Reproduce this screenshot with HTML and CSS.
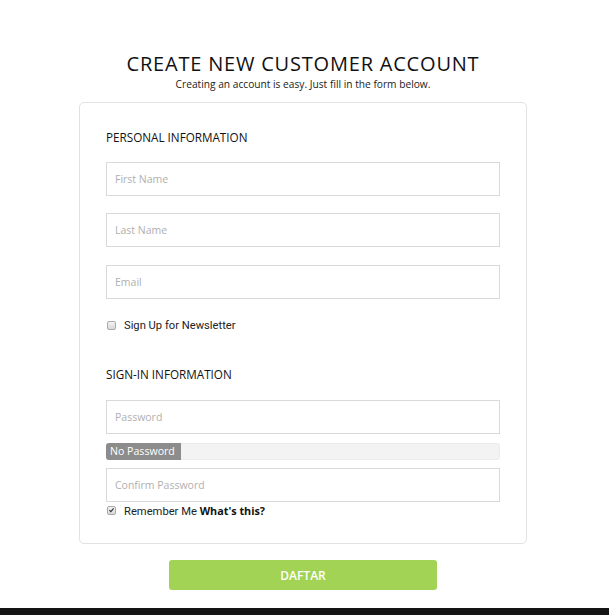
FILE: index.html
```html
<!DOCTYPE html>
<html lang="id">
<head>
<meta charset="utf-8">
<title>Create New Customer Account</title>
<link rel="stylesheet" href="styles.css">
</head>
<body>
<main class="page">
  <header class="head">
    <h1 class="title">CREATE NEW CUSTOMER ACCOUNT</h1>
    <p class="subtitle">Creating an account is easy. Just fill in the form below.</p>
  </header>
  <form class="card">
    <h2 class="section">PERSONAL INFORMATION</h2>
    <div class="field"><input class="input" type="text" placeholder="First Name"></div>
    <div class="field"><input class="input" type="text" placeholder="Last Name"></div>
    <div class="field field-email"><input class="input" type="email" placeholder="Email"></div>
    <label class="check check-news"><span class="box"></span><span class="check-text">Sign Up for Newsletter</span></label>

    <h2 class="section section-signin">SIGN-IN INFORMATION</h2>
    <div class="field"><input class="input" type="password" placeholder="Password"></div>
    <div class="meter"><span class="meter-fill">No Password</span></div>
    <div class="field field-last"><input class="input" type="password" placeholder="Confirm Password"></div>
    <label class="check check-remember"><span class="box box-checked"><svg viewBox="0 0 10 10" width="8" height="8"><path d="M2 5.2 L4.1 7.3 L8 2.6" fill="none" stroke="#333" stroke-width="1.6"/></svg></span><span class="check-text">Remember Me <b class="what">What's this?</b></span></label>
  </form>
  <div class="actions"><button class="btn" type="button">DAFTAR</button></div>
</main>
<footer class="footer"></footer>
</body>
</html>
```
FILE: styles.css
```css
* { box-sizing: border-box; }
html, body { margin: 0; padding: 0; background: #fff; }
body {
  font-family: "Open Sans", "Liberation Sans", sans-serif;
  color: #222;
  min-height: 615px;
  display: flex;
  flex-direction: column;
}
.page {
  flex: 1;
  display: flex;
  flex-direction: column;
  align-items: center;
  padding: 50px 3px 0 0;
}
.head { text-align: center; }
.title {
  margin: 0;
  font-size: 20px;
  font-weight: 500;
  line-height: 28px;
  color: #111;
  letter-spacing: 0.8px;
}
.subtitle {
  margin: 0;
  font-size: 10.2px;
  line-height: 12px;
  color: #222;
}
.card {
  width: 448px;
  margin-top: 12px;
  border: 1px solid #e2e2e2;
  border-radius: 5px;
  padding: 25px 26px 25px 26px;
  display: flex;
  flex-direction: column;
}
.section {
  margin: 0 0 16px 0;
  font-size: 11.7px;
  font-weight: 400;
  line-height: 18px;
  color: #111;
}
.section-signin { margin-top: 32px; margin-bottom: 17px; }
.field { margin-bottom: 17px; }
.field-email { margin-top: 1px; }
.field-last { margin-bottom: 0; }
.input {
  display: block;
  width: 394px;
  height: 34px;
  border: 1px solid #d9d9d9;
  border-radius: 0;
  padding: 0 8px;
  font-family: "Open Sans", sans-serif;
  font-size: 10.5px;
  color: #333;
  outline: none;
}
.input::placeholder { color: #b0b0b0; }
.check {
  display: flex;
  align-items: center;
  height: 16px;
  font-family: Roboto, "Liberation Sans", sans-serif;
  font-size: 11.2px;
  color: #222;
}
.check-news { margin-top: 1px; }
.box {
  width: 9px;
  height: 9px;
  margin-left: 1px;
  margin-right: 8px;
  border: 1px solid #a9a9a9;
  border-radius: 2px;
  background: linear-gradient(#f4f4f4, #d8d8d8);
  display: flex;
  align-items: center;
  justify-content: center;
}
.box-checked svg { display: block; }
.what {
  font-family: "Open Sans", sans-serif;
  font-weight: 700;
  color: #111;
  font-size: 10.8px;
}
.meter {
  width: 394px;
  height: 17px;
  margin: -8px 0 8px 0;
  background: #f3f3f3;
  border: 1px solid #eaeaea;
  border-radius: 3px;
  display: flex;
}
.meter-fill {
  width: 75px;
  margin: -1px 0 -1px -1px;
  background: #8c8c8c;
  border-radius: 3px 0 0 3px;
  color: #fff;
  font-size: 10.6px;
  line-height: 17px;
  padding-left: 4px;
}
.actions { margin-top: 16px; }
.btn {
  width: 268px;
  height: 30px;
  border: 0;
  border-radius: 3px;
  background: #a3d354;
  color: #fff;
  font-family: "Open Sans", sans-serif;
  font-size: 12px;
  font-weight: 600;
  cursor: pointer;
}
.footer {
  height: 7px;
  background: #151515;
}
```
